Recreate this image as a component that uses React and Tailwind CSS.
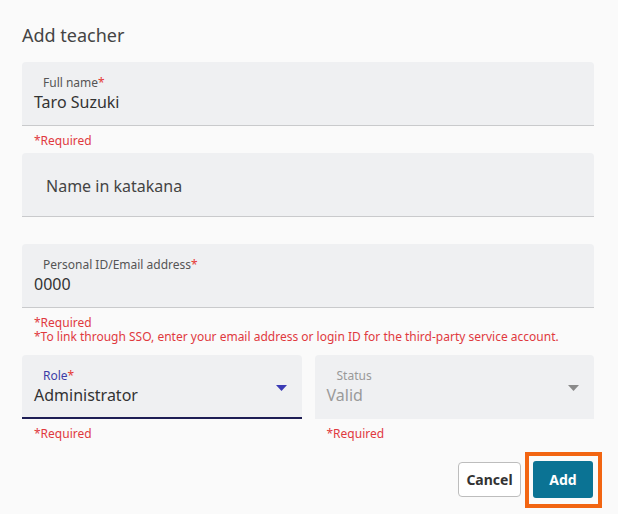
import React from 'react';

const Caret = ({ color }) => (
    <svg width="11" height="6" viewBox="0 0 11 6" className="absolute right-[15px] top-[30px]">
        <path d="M0 0 L11 0 L5.5 6 Z" fill={color} />
    </svg>
);

const Field = ({ label, required, value }) => (
    <div className="h-[64px] bg-[#eff0f2] rounded-t-[4px] border-b border-[#c9cacc] pt-[13px]">
        <div className="pl-[21px] text-[12px] leading-[16px] text-[#555]">
            {label}{required && <span className="text-[#e53935]">*</span>}
        </div>
        <div className="pl-[12px] text-[16px] leading-[22px] text-[#333]">{value}</div>
    </div>
);

const Helper = ({ children, className = '' }) => (
    <div className={`text-[12px] leading-[14px] text-[#e0393e] pl-[12px] ${className}`}>{children}</div>
);

export default function App() {
    return (
        <div className="w-full h-[514px] bg-[#fafafa] pl-[22px] pr-[24px] font-['Noto_Sans',sans-serif]">
            <h2 className="pt-[23px] text-[18px] leading-[24px] text-[#444]">Add teacher</h2>

            <div className="mt-[15px]">
                <Field label="Full name" required value="Taro Suzuki" />
                <Helper className="pt-[8px] h-[27px]">*Required</Helper>

                <div className="h-[64px] bg-[#eff0f2] rounded-t-[4px] border-b border-[#c9cacc] flex items-center pl-[24px] pt-[2px] text-[16px] text-[#444]">
                    Name in katakana
                </div>
                <div className="h-[27px]" />

                <Field label="Personal ID/Email address" required value="0000" />
                <Helper className="pt-[8px] h-[47px]">
                    <div>*Required</div>
                    <div>*To link through SSO, enter your email address or login ID for the third-party service account.</div>
                </Helper>

                <div className="grid grid-cols-2 gap-[13px]">
                    <div>
                        <div className="relative h-[64px] bg-[#eff0f2] rounded-t-[4px] border-b-2 border-[#1e1e55] pt-[13px]">
                            <div className="pl-[21px] text-[12px] leading-[16px] text-[#3d3da6]">
                                Role<span className="text-[#e53935]">*</span>
                            </div>
                            <div className="pl-[12px] text-[16px] leading-[22px] text-[#333]">Administrator</div>
                            <Caret color="#3b3bb5" />
                        </div>
                        <Helper className="pt-[8px]">*Required</Helper>
                    </div>
                    <div>
                        <div className="relative h-[64px] bg-[#eff0f2] rounded-t-[4px] pt-[13px]">
                            <div className="pl-[22px] text-[12px] leading-[16px] text-[#999]">Status</div>
                            <div className="pl-[12px] text-[16px] leading-[22px] text-[#9a9a9a]">Valid</div>
                            <Caret color="#8a8a8a" />
                        </div>
                        <Helper className="pt-[8px]">*Required</Helper>
                    </div>
                </div>

                <div className="mt-[20px] flex justify-end items-center gap-[12px] pr-[1px]">
                    <button className="h-[35px] w-[63px] bg-white border border-[#bdbdbd] rounded-[4px] text-[14px] font-bold text-[#333]">
                        Cancel
                    </button>
                    <button className="relative h-[37px] w-[60px] bg-[#0b7394] rounded-[3px] text-[14px] font-bold text-white">
                        Add
                        <span className="absolute -left-[8px] -right-[9px] -top-[9px] -bottom-[10px] border-4 border-[#f26512]" />
                    </button>
                </div>
            </div>
        </div>
    );
}
